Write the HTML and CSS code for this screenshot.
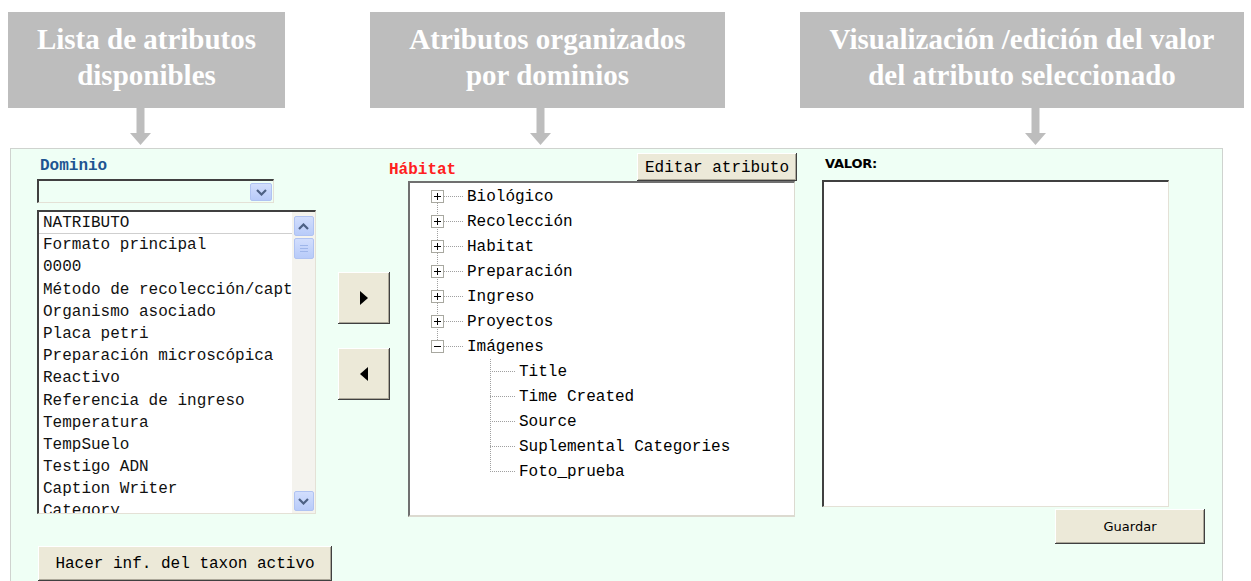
FILE: index.html
```html
<!DOCTYPE html>
<html lang="es">
<head>
    <meta charset="UTF-8">
    <title>Atributos del taxon</title>
    <link rel="stylesheet" href="styles.css">
</head>
<body>
    <!-- Callouts -->
    <div class="callouts">
        <div class="callout callout-list">
            <div class="callout-box">Lista de atributos<br>disponibles</div>
            <svg class="arrow" width="21" height="37" viewBox="0 0 21 37"><rect x="6.5" y="0" width="8" height="25"/><polygon points="0,25 21,25 10.5,37"/></svg>
        </div>
        <div class="callout callout-tree">
            <div class="callout-box">Atributos organizados<br>por dominios</div>
            <svg class="arrow" width="21" height="37" viewBox="0 0 21 37"><rect x="6.5" y="0" width="8" height="25"/><polygon points="0,25 21,25 10.5,37"/></svg>
        </div>
        <div class="callout callout-value">
            <div class="callout-box">Visualización /edición del valor<br>del atributo seleccionado</div>
            <svg class="arrow" width="21" height="37" viewBox="0 0 21 37"><rect x="6.5" y="0" width="8" height="25"/><polygon points="0,25 21,25 10.5,37"/></svg>
        </div>
    </div>

    <!-- Form panel -->
    <div class="panel">
        <div class="col-left">
            <div class="label-domain">Dominio</div>
            <div class="select">
                <span class="xp-btn select-btn">
                    <svg width="11" height="7" viewBox="0 0 11 7"><polyline points="1,1 5.5,5.5 10,1" fill="none" stroke="#4d6185" stroke-width="2.2"/></svg>
                </span>
            </div>
            <div class="listbox">
                <ul class="list-items">
                    <li class="first">NATRIBUTO</li>
                    <li>Formato principal</li>
                    <li>0000</li>
                    <li>Método de recolección/captura</li>
                    <li>Organismo asociado</li>
                    <li>Placa petri</li>
                    <li>Preparación microscópica</li>
                    <li>Reactivo</li>
                    <li>Referencia de ingreso</li>
                    <li>Temperatura</li>
                    <li>TempSuelo</li>
                    <li>Testigo ADN</li>
                    <li>Caption Writer</li>
                    <li>Category</li>
                </ul>
                <div class="scrollbar">
                    <span class="xp-btn scroll-btn">
                        <svg width="11" height="7" viewBox="0 0 11 7"><polyline points="1,6 5.5,1.5 10,6" fill="none" stroke="#4d6185" stroke-width="2.2"/></svg>
                    </span>
                    <span class="xp-btn scroll-thumb">
                        <svg width="8" height="9" viewBox="0 0 8 9"><path d="M0 1.5h8M0 4.5h8M0 7.5h8" stroke="#9fb6ea" stroke-width="1"/></svg>
                    </span>
                    <span class="scroll-space"></span>
                    <span class="xp-btn scroll-btn">
                        <svg width="11" height="7" viewBox="0 0 11 7"><polyline points="1,1 5.5,5.5 10,1" fill="none" stroke="#4d6185" stroke-width="2.2"/></svg>
                    </span>
                </div>
            </div>
            <button class="btn btn-report">Hacer inf. del taxon activo</button>
        </div>

        <div class="col-move">
            <button class="btn btn-move">
                <svg width="8" height="14" viewBox="0 0 8 14"><polygon points="0,0 8,7 0,14"/></svg>
            </button>
            <button class="btn btn-move">
                <svg width="8" height="14" viewBox="0 0 8 14"><polygon points="8,0 0,7 8,14"/></svg>
            </button>
        </div>

        <div class="col-tree">
            <div class="tree-head">
                <span class="label-habitat">Hábitat</span>
                <button class="btn btn-edit">Editar atributo</button>
            </div>
            <div class="treebox">
                <ul class="tree">
                    <li class="node"><span class="toggle"><svg width="13" height="13" viewBox="0 0 13 13"><rect x="0.5" y="0.5" width="12" height="12" fill="#fff" stroke="#a8a8a0"/><path d="M3 6.5h7M6.5 3v7" stroke="#000"/></svg></span><span class="branch"></span><span class="node-text">Biológico</span></li>
                    <li class="node"><span class="toggle"><svg width="13" height="13" viewBox="0 0 13 13"><rect x="0.5" y="0.5" width="12" height="12" fill="#fff" stroke="#a8a8a0"/><path d="M3 6.5h7M6.5 3v7" stroke="#000"/></svg></span><span class="branch"></span><span class="node-text">Recolección</span></li>
                    <li class="node"><span class="toggle"><svg width="13" height="13" viewBox="0 0 13 13"><rect x="0.5" y="0.5" width="12" height="12" fill="#fff" stroke="#a8a8a0"/><path d="M3 6.5h7M6.5 3v7" stroke="#000"/></svg></span><span class="branch"></span><span class="node-text">Habitat</span></li>
                    <li class="node"><span class="toggle"><svg width="13" height="13" viewBox="0 0 13 13"><rect x="0.5" y="0.5" width="12" height="12" fill="#fff" stroke="#a8a8a0"/><path d="M3 6.5h7M6.5 3v7" stroke="#000"/></svg></span><span class="branch"></span><span class="node-text">Preparación</span></li>
                    <li class="node"><span class="toggle"><svg width="13" height="13" viewBox="0 0 13 13"><rect x="0.5" y="0.5" width="12" height="12" fill="#fff" stroke="#a8a8a0"/><path d="M3 6.5h7M6.5 3v7" stroke="#000"/></svg></span><span class="branch"></span><span class="node-text">Ingreso</span></li>
                    <li class="node"><span class="toggle"><svg width="13" height="13" viewBox="0 0 13 13"><rect x="0.5" y="0.5" width="12" height="12" fill="#fff" stroke="#a8a8a0"/><path d="M3 6.5h7M6.5 3v7" stroke="#000"/></svg></span><span class="branch"></span><span class="node-text">Proyectos</span></li>
                    <li class="node"><span class="toggle"><svg width="13" height="13" viewBox="0 0 13 13"><rect x="0.5" y="0.5" width="12" height="12" fill="#fff" stroke="#a8a8a0"/><path d="M3 6.5h7" stroke="#000"/></svg></span><span class="branch"></span><span class="node-text">Imágenes</span></li>
                </ul>
                <ul class="tree-children">
                    <li class="leaf"><span class="branch"></span><span class="node-text">Title</span></li>
                    <li class="leaf"><span class="branch"></span><span class="node-text">Time Created</span></li>
                    <li class="leaf"><span class="branch"></span><span class="node-text">Source</span></li>
                    <li class="leaf"><span class="branch"></span><span class="node-text">Suplemental Categories</span></li>
                    <li class="leaf"><span class="branch"></span><span class="node-text">Foto_prueba</span></li>
                </ul>
            </div>
        </div>

        <div class="col-value">
            <div class="label-value">VALOR:</div>
            <div class="value-box"></div>
            <button class="btn btn-save">Guardar</button>
        </div>
    </div>
</body>
</html>
```

FILE: styles.css
```css
body {
    margin: 0;
    background-color: #fff;
    font-family: 'Liberation Mono', monospace;
    overflow: hidden;
}

/* Callouts on top */
.callouts {
    display: flex;
    padding-top: 12px;
}

.callout {
    display: flex;
    flex-direction: column;
}

.callout-box {
    background-color: #bdbdbd;
    color: #fff;
    font-family: 'Liberation Serif', serif;
    font-weight: bold;
    font-size: 29px;
    line-height: 36px;
    height: 96px;
    box-sizing: border-box;
    padding-top: 9px;
    text-align: center;
    white-space: nowrap;
}

.arrow {
    fill: #bdbdbd;
    display: block;
}

.callout-list { margin-left: 8px; }
.callout-list .callout-box { width: 277px; }
.callout-list .arrow { margin-left: 122px; }

.callout-tree { margin-left: 85px; }
.callout-tree .callout-box { width: 355px; }
.callout-tree .arrow { margin-left: 160px; }

.callout-value { margin-left: 75px; }
.callout-value .callout-box { width: 444px; }
.callout-value .arrow { margin-left: 225px; }

/* Panel */
.panel {
    display: flex;
    margin: 3px 0 0 10px;
    width: 1213px;
    height: 440px;
    box-sizing: border-box;
    border: 1px solid #cfd3cf;
    background-color: #effff5;
    padding: 4px 0 0 26px;
}

/* Shared controls */
.btn {
    font-family: 'Liberation Mono', monospace;
    font-size: 16px;
    color: #000;
    background-color: #ece9d8;
    border: none;
    box-shadow: inset -1px -1px #404040, inset 1px 1px #fff, inset -2px -2px #aca899;
    padding: 0;
    cursor: pointer;
}

.xp-btn {
    display: flex;
    align-items: center;
    justify-content: center;
    box-sizing: border-box;
    background: linear-gradient(#d2defd, #b8cbf9);
    border: 1px solid #b0c3f2;
    border-radius: 2px;
}

/* Left column */
.col-left {
    width: 295px;
    display: flex;
    flex-direction: column;
    align-items: flex-start;
}

.label-domain {
    color: #1d5592;
    font-weight: bold;
    font-size: 16px;
    line-height: 20px;
    margin: 3px 0 0 3px;
    height: 20px;
}

.select {
    margin-top: 3px;
    width: 237px;
    height: 24px;
    box-sizing: border-box;
    border-top: 2px solid #404040;
    border-left: 2px solid #404040;
    border-right: 1px solid #e4e1d6;
    border-bottom: 1px solid #e4e1d6;
    display: flex;
    justify-content: flex-end;
    padding: 2px 1px 1px 0;
}

.select-btn {
    width: 22px;
    height: 18px;
}

.listbox {
    margin-top: 7px;
    width: 279px;
    height: 304px;
    box-sizing: border-box;
    border-top: 2px solid #404040;
    border-left: 2px solid #404040;
    border-right: 1px solid #e4e1d6;
    border-bottom: 1px solid #e4e1d6;
    background-color: #fff;
    display: flex;
    overflow: hidden;
}

.list-items {
    list-style: none;
    margin: 0;
    padding: 0;
    flex: 1;
    overflow: hidden;
    font-size: 16px;
    color: #111;
}

.list-items li {
    height: 22.2px;
    line-height: 22px;
    padding: 1px 0 0 4px;
    box-sizing: border-box;
    line-height: 21px;
    white-space: nowrap;
    overflow: hidden;
}

.list-items li.first {
    border-bottom: 1px solid #cfcfcf;
}

.scrollbar {
    width: 23px;
    background-color: #f4f3ee;
    display: flex;
    flex-direction: column;
    align-items: center;
    padding: 4px 0 2px;
    box-sizing: border-box;
}

.scroll-btn {
    width: 20px;
    height: 20px;
}

.scroll-thumb {
    width: 20px;
    height: 21px;
    margin-top: 2px;
}

.scroll-space {
    flex: 1;
}

.btn-report {
    margin: 32px 0 0 1px;
    width: 294px;
    height: 35px;
}

/* Move buttons */
.col-move {
    width: 51px;
    margin-left: 6px;
    display: flex;
    flex-direction: column;
}

.btn-move {
    width: 52px;
    height: 52px;
    margin-top: 119px;
    display: flex;
    align-items: center;
    justify-content: center;
}

.btn-move + .btn-move {
    margin-top: 24px;
}

/* Tree column */
.col-tree {
    width: 408px;
    display: flex;
    flex-direction: column;
}

.tree-head {
    height: 28px;
    display: flex;
    justify-content: space-between;
    align-items: flex-start;
}

.label-habitat {
    color: #ff2020;
    font-weight: bold;
    font-size: 16px;
    line-height: 20px;
    margin-top: 7px;
}

.btn-edit {
    width: 160px;
    height: 28px;
    padding-top: 1px;
}

.treebox {
    margin-left: 19px;
    width: 387px;
    height: 336px;
    box-sizing: border-box;
    border-top: 2px solid #707070;
    border-left: 2px solid #707070;
    border-right: 1px solid #dcdad0;
    border-bottom: 2px solid #dcdad0;
    background-color: #fff;
    font-size: 16px;
    color: #000;
    padding-top: 1px;
}

.tree,
.tree-children {
    list-style: none;
    margin: 0;
    padding: 0;
    position: relative;
}

.tree::before {
    content: '';
    position: absolute;
    left: 27px;
    top: 12px;
    height: 150px;
    border-left: 1px dotted #a0a0a0;
}

.tree-children::before {
    content: '';
    position: absolute;
    left: 80px;
    top: 0;
    bottom: 12px;
    border-left: 1px dotted #a0a0a0;
}

.node,
.leaf {
    height: 25px;
    display: flex;
    align-items: center;
}

.node {
    padding-left: 21px;
}

.toggle {
    width: 13px;
    height: 13px;
    position: relative;
    z-index: 1;
}

.toggle svg {
    display: block;
}

.node .branch {
    width: 19px;
    border-top: 1px dotted #a0a0a0;
    margin-right: 4px;
}

.leaf {
    padding-left: 80px;
}

.leaf .branch {
    width: 25px;
    border-top: 1px dotted #a0a0a0;
    margin-right: 4px;
}

.node-text {
    line-height: 25px;
    padding-top: 2px;
    white-space: nowrap;
}

/* Value column */
.col-value {
    width: 383px;
    margin-left: 25px;
    display: flex;
    flex-direction: column;
    align-items: flex-start;
}

.label-value {
    font-family: 'DejaVu Sans', sans-serif;
    font-weight: bold;
    font-size: 13px;
    line-height: 16px;
    margin: 3px 0 0 3px;
    letter-spacing: -0.2px;
}

.value-box {
    margin-top: 8px;
    width: 347px;
    height: 327px;
    box-sizing: border-box;
    border-top: 2px solid #404040;
    border-left: 2px solid #404040;
    border-right: 1px solid #e4e1d6;
    border-bottom: 1px solid #e4e1d6;
    background-color: #fff;
}

.btn-save {
    align-self: flex-end;
    margin-top: 2px;
    width: 150px;
    height: 35px;
    font-family: 'DejaVu Sans', sans-serif;
    font-size: 13px;
}
```
